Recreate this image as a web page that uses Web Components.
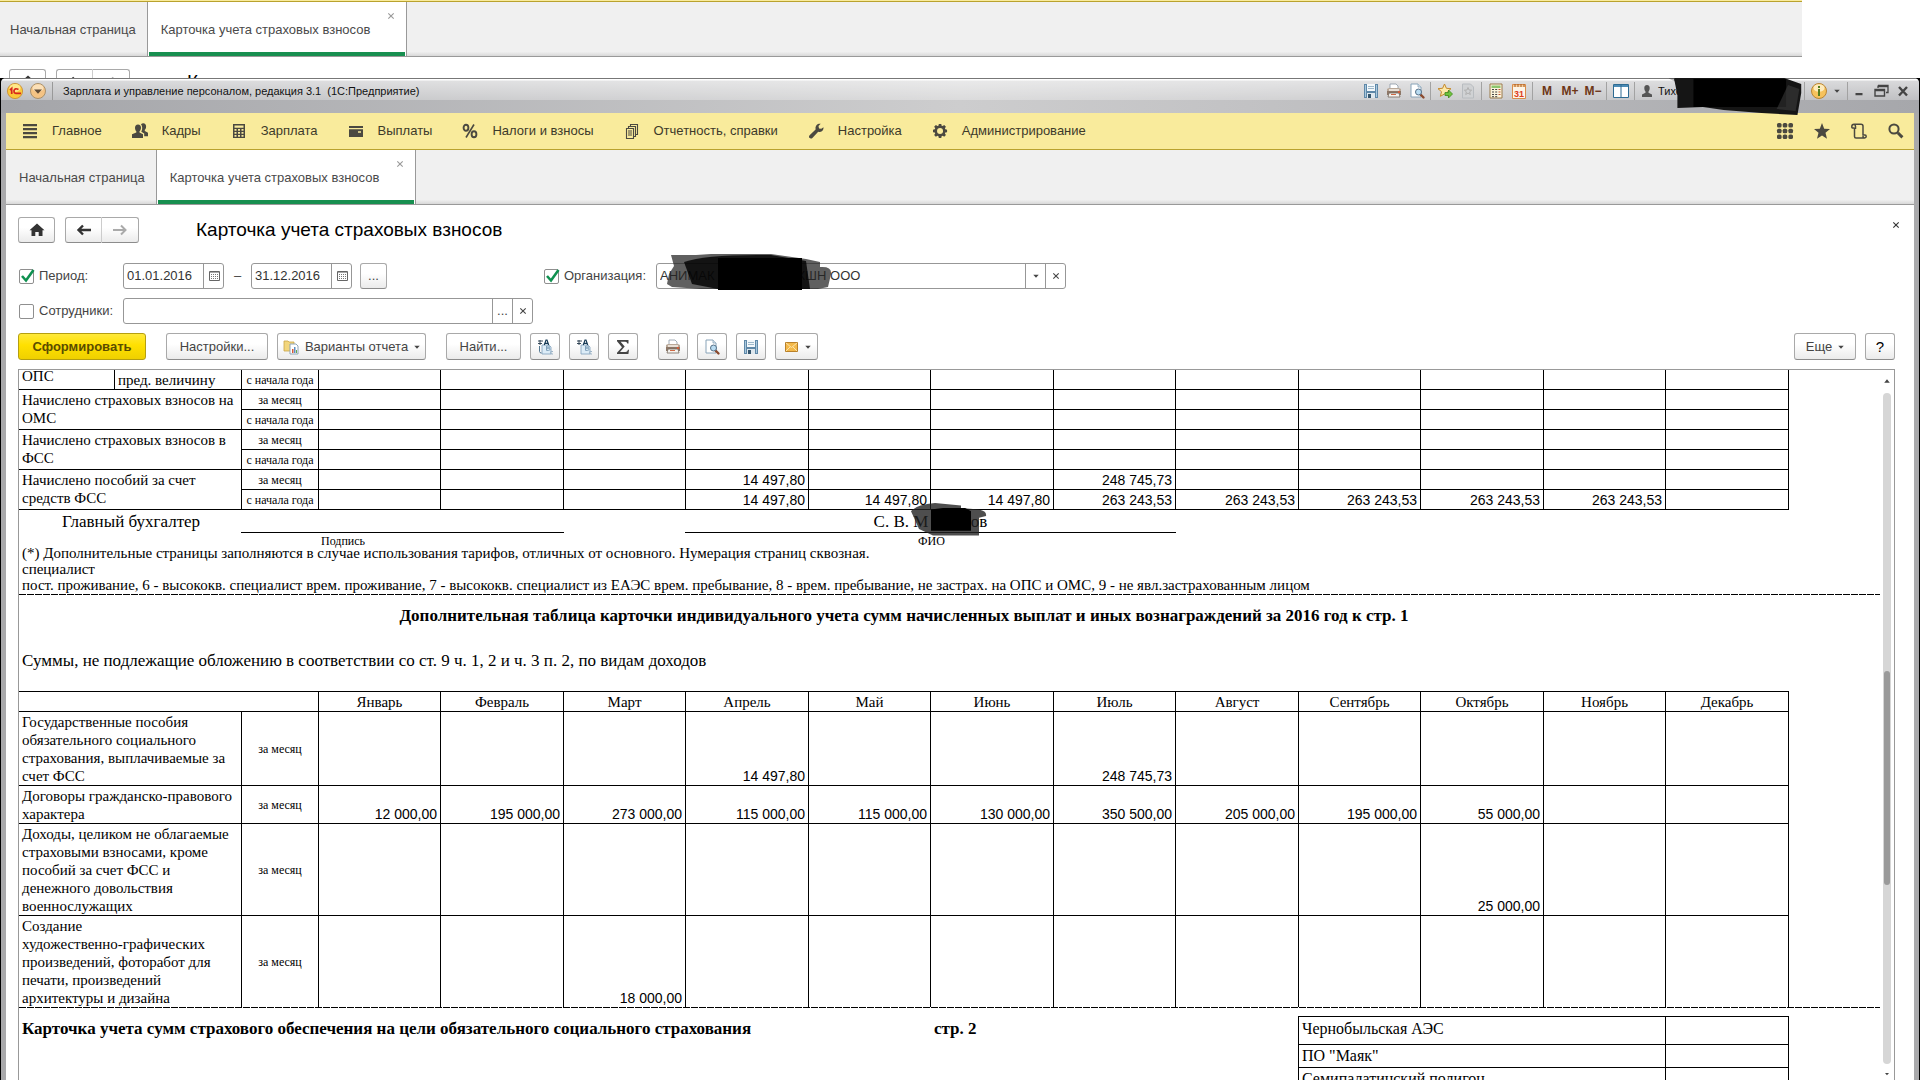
<!DOCTYPE html>
<html lang="ru">
<head>
<meta charset="utf-8">
<title>Карточка учета страховых взносов</title>
<style>
  html, body { height: 100%; margin: 0; }
  body { background: #fff; overflow: hidden; font: 13px/16px "Liberation Sans", Arial, sans-serif; color: #444; }
</style>
</head>
<body>
<payroll-desktop></payroll-desktop>

<script>
/* Registers an element whose shadow root holds the given styles and markup. */
function define(name, css, html, setup) {
  const template = document.createElement('template');
  customElements.define(name, class extends HTMLElement {
    constructor() {
      super();
      template.innerHTML = '<style>*{box-sizing:border-box}' + css + '</style>' +
        (typeof html === 'function' ? '' : html);
      const root = this.attachShadow({ mode: 'open' });
      root.append(template.content.cloneNode(true));
    }
    connectedCallback() {
      if (this.ready) return;
      this.ready = true;
      if (typeof html === 'function') {
        this.shadowRoot.innerHTML = '<style>*{box-sizing:border-box}' + css + '</style>' + html(this);
      }
      if (setup) setup(this, this.shadowRoot);
    }
  });
}

const floppy = '<path d="M1 1h14v14H1z" fill="#5f88a8"/><path d="M2 2h1v12H2zM13 2h1v12h-1z" fill="#a9c9de"/><path d="M4 1h8v7H4z" fill="#f3f8fb"/><path d="M5 3h6v1H5zM5 5h6v1H5z" fill="#9db8ca"/><path d="M4 10h8v5H4z" fill="#dfe8ee"/><path d="M5 11h3v4H5z" fill="#35566e"/>';
const printer = '<path d="M4 1h6l2 2v4H4z" fill="#fff" stroke="#8a98a5" stroke-width=".8"/><path d="M1 6l2-1h10l2 1v6H1z" fill="#b9a898"/><path d="M1 8h14v4H1z" fill="#8d7767"/><path d="M3 6h10v2H3z" fill="#e8dfd6"/><path d="M3 10h10l1 4H2z" fill="#f6f3ef" stroke="#75685d" stroke-width=".8"/><path d="M5 11h5v1H5z" fill="#cf6a45"/><circle cx="13" cy="9" r="1" fill="#e9542c"/>';
const preview = '<path d="M2 1h7l3 3v10H2z" fill="#fff" stroke="#88a3b8"/><path d="M9 1v3h3" fill="#dbe7ef" stroke="#88a3b8" stroke-width=".8"/><path d="M11.5 11.500l3 3" stroke="#8b4a2f" stroke-width="2.400" stroke-linecap="round"/><circle cx="9.500" cy="9" r="3" fill="#b9dcf2" stroke="#557087"/>';
const sheetLetters = '<path d="M5 6h7l2 2v7H5z" fill="#dcecf7" stroke="#7fa0ba" stroke-width=".8"/><path d="M1 2h5M1 4.500h4M3 1v5" stroke="#24394a" stroke-width=".9"/><path d="M7.300 6l1.700-5h1l1.700 5M8 4.300h3" fill="none" stroke="#163a56" stroke-width="1.200"/><path d="M9.500 7h2q1 0 1 1t-1 1h-2h2q1.500 0 1.500 1.200T11.500 11.400h-2z" fill="none" stroke="#7fa0ba"/><path d="M16 12.600q-2.500-1-2.500 1T16 15" fill="none" stroke="#9ab3c6"/>';

const ICONS = {
  lines: '<path d="M1 1h14v2.200H1zM1 5h14v2.200H1zM1 9h14v2.200H1zM1 13h14v2.200H1z" fill="currentColor"/>',
  people: '<path d="M6 1.500c2 0 3 1.400 3 3.200 0 1.600-.7 2.800-1.500 3.500v1.200l3.500 1.800V15H0v-3.800l4.300-1.800V8.200C3.500 7.500 3 6.300 3 4.700c0-1.800 1-3.200 3-3.200z" fill="currentColor"/><path d="M9 1.200C9.600.5 10.400.2 11.200.2c1.900 0 2.900 1.300 2.900 3.200 0 1.500-.5 2.700-1.300 3.400v1.300l3.200 1.600v3.600h-3.800v-2.900L9.300 8.700C10.700 6.200 10.400 3 9 1.200z" fill="currentColor"/>',
  calc: '<path d="M2 1h12v14H2zM3.500 2.500v2.200h9V2.500zM3.500 6v1.800h2V6zM7 6v1.800h2V6zM10.500 6v1.800h2V6zM3.500 9v1.800h2V9zM7 9v1.800h2V9zM10.500 9v1.800h2V9zM3.500 12v1.700h2V12zM7 12v1.700h2V12zM10.500 12v1.700h2V12z" fill="currentColor" fill-rule="evenodd"/>',
  wallet: '<path d="M1 3h14v2H1zM1 6.200h14V14H1zM10 8.200v1.500h3V8.200z" fill="currentColor" fill-rule="evenodd"/>',
  percent: '<g fill="none" stroke="currentColor" stroke-width="1.900"><ellipse cx="4" cy="4.800" rx="2.400" ry="3"/><ellipse cx="12" cy="11.200" rx="2.400" ry="3"/><path d="M12 1.500L4 14.500" stroke-width="1.600"/></g>',
  docs: '<g fill="none" stroke="currentColor" stroke-width="1.100"><path d="M2.500 5.500h7v10h-7zM4.500 5V3.500h7v10H10M6.500 3V1.500h7v10H12"/><path d="M4 8h4M4 10h4M4 12h4"/></g>',
  wrench: '<path d="M15.500 4.200c.3 2.400-1.300 4.500-3.600 4.700-.6 0-1.200 0-1.700-.2L4.400 14.900c-.8.8-2 .9-2.800.2-.8-.8-.8-2 0-2.800l6-5.900C7 4.100 8.200 1.500 10.700.8c.7-.2 1.400-.2 2 0L10.500 3l.5 2.400 2.300.4z" fill="currentColor"/>',
  gear: '<path d="M6.600 1h2.800l.4 2 1.200.5 1.700-1.200 2 2-1.200 1.700.5 1.200 2 .4v2.800l-2 .4-.5 1.200 1.200 1.700-2 2-1.700-1.200-1.200.5-.4 2H6.600l-.4-2-1.200-.5-1.700 1.200-2-2L2.500 12 2 10.800 0 10.400V7.600l2-.4L2.500 6 1.300 4.300l2-2L5 3.500 6.200 3zM8 5.600a3.400 3.400 0 1 0 0 6.800 3.400 3.400 0 0 0 0-6.800z" transform="translate(1 0) scale(.88)" fill="currentColor" fill-rule="evenodd"/>',
  grid: '<g fill="currentColor"><rect width="4.600" height="4.600" rx="1.600"/><rect x="5.700" width="4.600" height="4.600" rx="1.600"/><rect x="11.400" width="4.600" height="4.600" rx="1.600"/><rect y="5.700" width="4.600" height="4.600" rx="1.600"/><rect x="5.700" y="5.700" width="4.600" height="4.600" rx="1.600"/><rect x="11.400" y="5.700" width="4.600" height="4.600" rx="1.600"/><rect y="11.400" width="4.600" height="4.600" rx="1.600"/><rect x="5.700" y="11.400" width="4.600" height="4.600" rx="1.600"/><rect x="11.400" y="11.400" width="4.600" height="4.600" rx="1.600"/></g>',
  star: '<path d="M8 0l2.200 5.700 5.800.3-4.500 3.800L13 15.700 8 12.400l-5 3.300 1.500-5.900L0 6l5.800-.3z" fill="currentColor"/>',
  scroll: '<path d="M3.500 5V13.500q0 1.500 1.500 1.500h8.500M3.500 5H1.500Q.8 5 .8 3.500 .8 1.200 3 1.200h7q2 0 2 2V12h2q1.200 0 1.200 1.400T13.500 15q-1.500 0-1.500-2M3 1.200q1.500.3 1.500 2V6" fill="none" stroke="currentColor" stroke-width="1.500"/>',
  search: '<circle cx="6" cy="6" r="4.600" fill="none" stroke="currentColor" stroke-width="2"/><path d="M9.800 9.800l4.600 4.600" stroke="currentColor" stroke-width="3"/>',
  home: '<path d="M8 1.500l7.500 6.700h-2V14H9.700v-4H6.300v4H2.500V8.200h-2z" fill="#333"/>',
  back: '<path d="M15 8H3M7 3.500L2.500 8 7 12.500" fill="none" stroke="#333" stroke-width="2.400"/>',
  forward: '<path d="M1 8h12M9 3.500L13.500 8 9 12.500" fill="none" stroke="#aaa" stroke-width="2"/>',
  date: '<path d="M3.500 3.500h10v9h-10z" fill="none" stroke="#666"/><path d="M5 6.500h7M5 8.500h7M5 10.500h7" stroke="#777" stroke-dasharray="1 1"/><path d="M4 4.500h9" stroke="#aaa"/>',
  variants: '<path d="M1 2h4l1 1h5v9H1z" fill="#f2d67d" stroke="#c9a546" stroke-width=".8"/><path d="M7 5h6l2 2v8H7z" fill="#fff" stroke="#8fa5b7"/><path d="M9 10h1.500v4H9z" fill="#d65a3a"/><path d="M11 8h1.500v6H11z" fill="#5d8fc4"/><path d="M13 11h1v3h-1z" fill="#67a54b"/>',
  letters: sheetLetters + '<path d="M2.500 7v5.500q0 1.500 2 1.500" fill="none" stroke="#557891"/>',
  letters2: sheetLetters,
  sigma: '<path d="M2 1h11.500v3.500h-1.200q-.2-1.800-2-1.800H5.600L9.700 7.600 5 13h5.500q2 0 2.500-2.200h1L13.400 15H2v-1.200L7 8.200 2 2.200z" fill="#444"/>',
  printer, preview, floppy,
  mail: '<path d="M2.500 3.500h12v9h-12z" fill="#f4b94a" stroke="#b9812a"/><path d="M3 4l5.500 4.500L14 4M3 12l4-4M14 12l-4-4" fill="none" stroke="#fbe4ab"/>',
  starAdd: '<path d="M7.500 1l1.900 4.300 4.600.4-3.500 3 1.100 4.600-4.100-2.400-4.100 2.400 1.100-4.600L1 5.700l4.600-.4z" fill="#fde9a8" stroke="#c58a2d"/><path d="M8 9.500h3.500V7l4 4-4 4v-2.500H8z" fill="#6fc23c" stroke="#3d8a1c" stroke-width=".8"/>',
  starDoc: '<path d="M2.500 1h8l3 3v11h-11z" fill="#d0d2d4" stroke="#b8bcc0"/><path d="M8 4.500l1 2.500 2.600.2-2 1.700.7 2.600L8 10.100l-2.300 1.400.7-2.600-2-1.700L7 7z" fill="none" stroke="#b0b0b0"/>',
  calcColor: '<path d="M2 1h12v14H2z" fill="#fbf4dc" stroke="#9a7a4a"/><path d="M3.500 2.500h9v2.500h-9z" fill="#8cc56d"/><path d="M4 6.500h2M4 9h2M4 11.500h2M4 13.700h2M7.200 6.500h2M7.200 9h2M7.200 11.500h2M7.200 13.700h2" stroke="#444"/><path d="M10.500 6.500h2M10.500 9h2M10.500 11.500h2" stroke="#c4542e"/>',
  calendar: '<path d="M1.500 1.500h13v14h-13z" fill="#fdf5e8" stroke="#d98c4a"/><path d="M2 2h12v2H2z" fill="#f9cf9c"/><path d="M4 1v3M7 1v3M10 1v3M13 1v3" stroke="#a65c22"/><text x="8" y="14" text-anchor="middle" font-size="9" font-weight="bold" fill="#dd3c1c">31</text>',
  split: '<path d="M.5 1.500h15v13H.5z" fill="#fff" stroke="#2e6b92"/><path d="M1 2h14v2H1z" fill="#4c8bb5"/><path d="M8 2v12" stroke="#2e6b92"/>',
  user: '<path d="M8 2c2 0 2.700 1.400 2.700 3S10 8 9.500 8.600v1.200L13 11.500V14H3v-2.500l3.500-1.700V8.600C6 8 5.300 6.600 5.300 5S6 2 8 2z" fill="#555"/>',
  info: '<circle cx="8" cy="8" r="7.500" fill="#f6c25d" stroke="#b98535"/><ellipse cx="8" cy="5" rx="5.500" ry="3.800" fill="#fdebbd"/><path d="M7 3h2v2H7zM7 6h2v7H7z" fill="#557d1e"/>',
  brand: '<circle cx="8" cy="8" r="7.600" fill="#fbc83a" stroke="#c98a2b" stroke-width=".8"/><ellipse cx="8" cy="5" rx="5.500" ry="4" fill="#ffe88a"/><path d="M3 7l1.700-1.500V11M11.500 6.500Q8 4.600 7 7.500 6.800 10.500 9.500 10.300H14" fill="none" stroke="#d8261c" stroke-width="1.700"/>',
  drop: '<circle cx="8" cy="8" r="7.500" fill="#f4c384" stroke="#a8906c"/><ellipse cx="8" cy="5" rx="5.500" ry="3.800" fill="#fbe0b8"/><path d="M4 6.500h8L8 10.800z" fill="#5e4a36"/>',
  minimize: '<path d="M4.500 10h7v2.200h-7z" fill="#444"/>',
  restore: '<path d="M5 2.500h10v7h-2M5 2.500V5M5 3.500h10" fill="none" stroke="#444" stroke-width="1.300"/><path d="M2 6.500h9.500v6.500H2zM2 7.500h9" fill="none" stroke="#444" stroke-width="1.400"/>',
  close: '<path d="M4 4l8 8.500M12 4l-8 8.500" stroke="#444" stroke-width="2.400"/>',
  x: '<path d="M5.300 5.300l5.400 5.400M10.700 5.300l-5.400 5.400" stroke="currentColor" stroke-width="1.100"/>',
  down: '<path d="M5.300 6.800h5.400L8 9.800z" fill="#444"/>',
  up: '<path d="M4.800 10h6.400L8 6z" fill="#444"/>'
};

define('ui-icon',
  ':host{display:inline-flex;flex:none;width:16px;height:16px}svg{width:100%;height:100%;overflow:visible}',
  el => `<svg viewBox="0 0 16 16" aria-hidden="true">${ICONS[el.getAttribute('name')]}</svg>`);

/* Push button with an optional look: primary, narrow side by side pair. */
define('ui-button', `
  :host{display:inline-flex;height:26px}
  button{font:inherit;color:#444;width:100%;height:100%;margin:0;padding:0 var(--pad,10px);display:flex;align-items:center;justify-content:center;gap:6px;
    border:1px solid #a9a9a9;border-bottom-color:#8c8c8c;border-radius:3px;background:linear-gradient(#fff 40%,#ebebeb);white-space:nowrap}
  :host([primary]) button{font-weight:bold;color:#5a4c00;border-color:#b59f10;background:linear-gradient(#ffe93a,#ffe000 45%,#efd000)}
  :host([first]) button{border-radius:3px 0 0 3px;border-right-color:#ccc}
  :host([last]) button{border-radius:0 3px 3px 0;border-left:0}`,
  el => `<button type="button" aria-label="${el.getAttribute('label') || ''}"><slot></slot></button>`,
  (el, root) => { if (!el.hasAttribute('label')) root.querySelector('button').removeAttribute('aria-label'); });

define('ui-check', `
  :host{display:inline-flex}
  label{display:flex;align-items:center;gap:5px;white-space:nowrap}
  span{display:grid}
  input,svg{grid-area:1/1}
  input{appearance:none;width:15px;height:15px;margin:0;border:1px solid #8f8f8f;border-radius:2px;background:#fff}
  svg{width:15px;height:15px;overflow:visible;pointer-events:none;display:none}
  input:checked+svg{display:block}`,
  el => `<label><span><input type="checkbox" ${el.hasAttribute('checked') ? 'checked' : ''}><svg viewBox="0 0 15 15"><path d="M3 7l4 4.500L14.500 1" fill="none" stroke="#0f9150" stroke-width="2.600"/></svg></span><slot></slot></label>`);

/* Text box with small buttons attached on its right side. */
define('ui-field', `
  :host{display:flex;height:26px;border:1px solid #979797;border-radius:3px;background:#fff}
  input{font:inherit;color:#333;flex:1;min-width:0;border:0;padding:0 0 0 3px;margin:0;background:none;outline:0}
  div{display:flex}
  ::slotted(button){all:unset;width:20px;display:flex;align-items:center;justify-content:center;border-left:1px solid #979797;color:#444}`,
  el => `<input type="text" aria-label="${el.getAttribute('label')}" value="${el.getAttribute('value') || ''}"><div><slot></slot></div>`);

define('page-tabs', `
  :host{display:flex;height:55px;background:linear-gradient(#f0f0f0 92%,#d8d8d8);border-bottom:1px solid #999}
  button{font:inherit;color:#4a4a4a;background:none;border:0;margin:0;padding:2px 11px 0 var(--lead,13px);white-space:nowrap}
  .active{position:relative;width:260px;padding:2px 0 0 13px;text-align:left;background:#fff;border:solid #999;border-width:0 1px}
  .active::after{content:"";position:absolute;inset:auto 1px 0 1px;height:4px;background:#178f50}
  ui-icon{position:absolute;right:7px;top:6px;color:#999}`,
  '<button type="button">Начальная страница</button><button type="button" class="active">Карточка учета страховых взносов<ui-icon name="x"></ui-icon></button>');

define('form-header', `
  :host{display:flex;align-items:center;height:26px}
  .home{width:37px;margin-right:10px}
  .nav{width:37px}
  h1{flex:1;margin:0 0 0 57px;font-size:19px;line-height:24px;font-weight:normal;color:#000;white-space:nowrap}
  .home,.nav{--pad:0}`,
  `<ui-button class="home" label="Начальная страница"><ui-icon name="home"></ui-icon></ui-button>
   <ui-button class="nav" first label="Назад"><ui-icon name="back"></ui-icon></ui-button>
   <ui-button class="nav" last label="Вперед"><ui-icon name="forward"></ui-icon></ui-button>
   <h1>Карточка учета страховых взносов</h1><slot></slot>`);

define('title-bar', `
  :host{display:flex;align-items:center;height:35px;padding:0 8px 10px 6px;color:#111;font-size:11px;
    border-top:1px solid #777;
    background:linear-gradient(#fff 1px,#ffffff90 2px,#ffffff48 21px,#ffffff00 21px),linear-gradient(90deg,#a4a5a9,#cdcdce 50%,#c2c2c4 65%,#a6a7ab)}
  .sep{width:1px;height:18px;background:#999;margin:0 10px 0 6px}
  .drop{margin-left:7px}
  .title{flex:1;white-space:pre}
  button{all:unset;display:flex}
  .group{display:flex;align-items:center;gap:7px;height:18px;padding:0 5px 0 6px;border-right:1px solid #a2a2a2}
  .mem{width:16px;font-weight:bold;font-size:12px;color:#6d3616;justify-content:center}
  .user{width:170px;position:relative;gap:3px;padding-left:4px}
  .user svg{position:absolute;left:32px;top:-9px;width:138px;height:42px;overflow:visible}
  .info{gap:2px;padding-right:2px}
  .win{display:flex;gap:6px;padding-left:3px}`,
  `<ui-icon name="brand"></ui-icon><ui-icon class="drop" name="drop"></ui-icon><span class="sep"></span>
   <span class="title">Зарплата и управление персоналом, редакция 3.1  (1С:Предприятие)</span>
   <div class="group"><button aria-label="Сохранить"><ui-icon name="floppy"></ui-icon></button><button aria-label="Печать"><ui-icon name="printer"></ui-icon></button><button aria-label="Просмотр"><ui-icon name="preview"></ui-icon></button></div>
   <div class="group"><button aria-label="В избранное"><ui-icon name="starAdd"></ui-icon></button><button aria-label="Избранное"><ui-icon name="starDoc"></ui-icon></button></div>
   <div class="group"><button aria-label="Калькулятор"><ui-icon name="calcColor"></ui-icon></button><button aria-label="Календарь"><ui-icon name="calendar"></ui-icon></button></div>
   <div class="group"><button class="mem">M</button><button class="mem">M+</button><button class="mem">M−</button></div>
   <div class="group"><button aria-label="Окна"><ui-icon name="split"></ui-icon></button></div>
   <div class="group user"><ui-icon name="user"></ui-icon><span>Тихо</span>
     <svg viewBox="0 0 146 42" preserveAspectRatio="none" aria-hidden="true"><path d="M8 8Q5 3 20 2L50 0 78 4 124 5 142 11V20L138 42 100 40 60 37 38 34 11 35V22z" fill="#151515"/><path d="M8 8Q0 6 2 3L14 1V26z" fill="#222" opacity=".3"/><path d="M28 6h98v28H28z" fill="#000"/><path d="M128 12l12 4-4 22-20-2z" fill="#444" opacity=".5"/></svg></div>
   <div class="group info"><button aria-label="Справка"><ui-icon name="info"></ui-icon></button><ui-icon name="down"></ui-icon></div>
   <div class="win"><button aria-label="Свернуть"><ui-icon name="minimize"></ui-icon></button><button aria-label="Восстановить"><ui-icon name="restore"></ui-icon></button><button aria-label="Закрыть"><ui-icon name="close"></ui-icon></button></div>`);

define('menu-item', `
  :host{display:block}
  button{all:unset;display:flex;align-items:center;gap:14px;white-space:nowrap;color:#3d3a2a}
  ui-icon{color:#4b4940}`,
  el => `<button type="button"><ui-icon name="${el.getAttribute('icon')}"></ui-icon><slot></slot></button>`);

define('main-menu', `
  :host{display:flex;align-items:center;gap:30px;height:37px;padding:0 10px 0 16px;background:#f9eb9c;border-bottom:1px solid #b9a22e}
  .tools{display:flex;gap:21px;margin-left:auto}
  .tools button{all:unset;display:flex;color:#4b4940}`,
  `<menu-item icon="lines">Главное</menu-item><menu-item icon="people">Кадры</menu-item><menu-item icon="calc">Зарплата</menu-item>
   <menu-item icon="wallet">Выплаты</menu-item><menu-item icon="percent">Налоги и взносы</menu-item><menu-item icon="docs">Отчетность, справки</menu-item>
   <menu-item icon="wrench">Настройка</menu-item><menu-item icon="gear">Администрирование</menu-item>
   <div class="tools"><button aria-label="Все функции"><ui-icon name="grid"></ui-icon></button><button aria-label="Избранное"><ui-icon name="star"></ui-icon></button><button aria-label="История"><ui-icon name="scroll"></ui-icon></button><button aria-label="Поиск"><ui-icon name="search"></ui-icon></button></div>`);

define('report-filters', `
  :host{display:grid;gap:9px}
  .row{display:flex;align-items:center}
  .lead{width:105px;padding-left:1px}
  .date{width:101px}
  .dash{width:27px;text-align:center}
  .dots{width:27px;margin-left:8px;--pad:0}
  .org{margin-left:157px;width:112px}
  .wide{width:410px}
  .redact{position:relative}
  .redact svg{position:absolute;left:10px;top:-9px;width:166px;height:36px}`,
  `<div class="row">
     <ui-check class="lead" checked>Период:</ui-check>
     <ui-field class="date" label="Начало периода" value="01.01.2016"><button aria-label="Выбрать"><ui-icon name="date"></ui-icon></button></ui-field>
     <span class="dash">–</span>
     <ui-field class="date" label="Конец периода" value="31.12.2016"><button aria-label="Выбрать"><ui-icon name="date"></ui-icon></button></ui-field>
     <ui-button class="dots">...</ui-button>
     <ui-check class="org" checked>Организация:</ui-check>
     <div class="redact"><ui-field class="wide" label="Организация" value="АНИМАК${'&nbsp;'.repeat(23)}КШН ООО"><button aria-label="Список"><ui-icon name="down"></ui-icon></button><button aria-label="Очистить"><ui-icon name="x"></ui-icon></button></ui-field>
     <svg viewBox="0 0 166 36" aria-hidden="true"><path d="M5 1h25L45 0h60l35 5 14 3v5q12-1 11 7l-3 13-10 2H35L6 33 1 30 3 20 8 12z" fill="#222" opacity=".72"/><path d="M18 8Q40 0 105 1l35 6 4 28H52L26 30z" fill="#000" opacity=".8"/><path d="M52 4h84v32H52z" fill="#000"/></svg></div>
   </div>
   <div class="row">
     <ui-check class="lead">Сотрудники:</ui-check>
     <ui-field class="wide" label="Сотрудники"><button>...</button><button aria-label="Очистить"><ui-icon name="x"></ui-icon></button></ui-field>
   </div>`);

define('report-toolbar', `
  :host{display:flex;gap:9px}
  ui-button{height:27px}
  .gap{margin-right:11px}
  .main{width:128px}.set{width:102px}.var{width:149px;--pad:5px}.find{width:75px}
  .sq{width:30px;--pad:0}.mail{width:43px;--pad:0}
  .more{width:62px;margin-left:auto;--pad:0 0 0 10px}
  .tight{margin:0 -5px}`,
  `<ui-button primary class="main gap">Сформировать</ui-button>
   <ui-button class="set">Настройки...</ui-button>
   <ui-button class="var gap"><ui-icon name="variants"></ui-icon>Варианты отчета<ui-icon class="tight" name="down"></ui-icon></ui-button>
   <ui-button class="find">Найти...</ui-button>
   <ui-button class="sq" label="Развернуть"><ui-icon name="letters"></ui-icon></ui-button>
   <ui-button class="sq" label="Свернуть"><ui-icon name="letters2"></ui-icon></ui-button>
   <ui-button class="sq gap" label="Сумма"><ui-icon name="sigma"></ui-icon></ui-button>
   <ui-button class="sq" label="Печать"><ui-icon name="printer"></ui-icon></ui-button>
   <ui-button class="sq" label="Просмотр"><ui-icon name="preview"></ui-icon></ui-button>
   <ui-button class="sq" label="Сохранить"><ui-icon name="floppy"></ui-icon></ui-button>
   <ui-button class="mail" label="Отправить"><ui-icon name="mail"></ui-icon><ui-icon class="tight" name="down"></ui-icon></ui-button>
   <ui-button class="more">Еще<ui-icon class="tight" name="down"></ui-icon></ui-button>
   <ui-button class="sq" label="Справка"><b style="font-weight:normal;font-size:15px;color:#000">?</b></ui-button>`);

const MONTHS = ['Январь','Февраль','Март','Апрель','Май','Июнь','Июль','Август','Сентябрь','Октябрь','Ноябрь','Декабрь'];
const cols = '<colgroup><col style="width:96px"><col style="width:127px"><col style="width:77px">' +
  MONTHS.map((m, i) => `<col style="width:${i % 2 ? 123 : 122}px">`).join('') + '</colgroup>';
/* Twelve month cells; values are keyed by month index. */
const cells = (values = {}) => MONTHS.map((m, i) => `<td class="num">${values[i] || ''}</td>`).join('');
const pair = (label, month, year) =>
  `<tr><th colspan="2" rowspan="2">${label}</th><td class="kind">за месяц</td>${cells(month)}</tr>
   <tr><td class="kind">с начала года</td>${cells(year)}</tr>`;
const single = (label, values) => `<tr><th colspan="2">${label}</th><td class="kind">за месяц</td>${cells(values)}</tr>`;
const total = '263 243,53', part = '14 497,80';

define('report-sheet', `
  :host{display:block;width:1861px;font-family:"Liberation Serif","Times New Roman",serif;color:#000}
  table{border-collapse:separate;border-spacing:0;table-layout:fixed;width:1770px}
  td,th{border:solid #000;border-width:0 1px 1px 0;padding:0;height:20px;font-weight:normal}
  th{text-align:left;vertical-align:top;font-size:15px;line-height:18px;padding:1px 2px 0 3px}
  .top th{line-height:13px;padding-top:0}
  .top th+th{line-height:18px;padding-top:1px}
  .kind{font-size:12px;line-height:14px;text-align:center;white-space:nowrap}
  .num{font:14px/18px "Liberation Sans",Arial,sans-serif;text-align:right;vertical-align:bottom;padding-right:3px;white-space:nowrap}
  .months{border-top:1px solid #000;margin-top:6px}
  .months thead td{font-size:15px;line-height:18px;text-align:center}
  .months tbody tr:last-child>*{border-bottom:0}
  .sign{display:grid;grid-template-columns:222px 323px 121px 491px;font-size:17px;line-height:24px}
  .sign div{height:23px}
  .sign .line{border-bottom:1px solid #000;text-align:center}
  .sign .who{padding-left:43px}
  .sign small{font-size:12px;line-height:16px;height:12px}
  .name{position:relative;display:inline-block;white-space:pre}
  .name svg{position:absolute;left:37px;top:-7px;width:76px;height:35px}
  .sign small:nth-of-type(2){padding-left:80px}
  .sign small:nth-of-type(4){padding-left:233px}
  p{margin:0;padding-left:3px;font-size:15px;line-height:16px;white-space:nowrap}
  .cut{height:1px;background:repeating-linear-gradient(90deg,#000 0 7px,transparent 7px 8px)}
  .notes{padding-bottom:1px}
  h2{margin:0;font-size:17px;line-height:42px;width:1770px;text-align:center}
  .sub{font-size:17px;line-height:48px}
  .next{display:grid;grid-template-columns:912px 367px 491px;padding-top:8px}
  h3{margin:0;padding-left:3px;font-size:17px;line-height:26px}
  .places{width:491px;border:solid #000;border-width:1px 0 0 1px}
  .places td{height:23px;font-size:16px;line-height:20px;padding-left:3px}
  .places tr:first-child td{height:28px;padding-bottom:3px}`,
  `<table>${cols}
     <tr class="top"><th>ОПС</th><th>пред. величину</th><td class="kind">с начала года</td>${cells()}</tr>
     ${pair('Начислено страховых взносов на ОМС')}
     ${pair('Начислено страховых взносов в ФСС')}
     ${pair('Начислено пособий за счет средств ФСС', {3: part, 6: '248 745,73'}, {3: part, 4: part, 5: part, 6: total, 7: total, 8: total, 9: total, 10: total})}
   </table>
   <div class="sign">
     <div class="who">Главный бухгалтер</div><div class="line"></div><div></div>
     <div class="line"><span class="name">С. В. М          ов<svg viewBox="0 0 76 43" preserveAspectRatio="none" aria-hidden="true"><path d="M0 10Q5 2 24 0l26 3v3l18 2q8 2 7 8l-7 2v22H22L8 32 3 18z" fill="#222" opacity=".8"/><path d="M20 8l12-2h22l6 4v24H20z" fill="#000"/></svg></span></div>
     <small></small><small>Подпись</small><small></small><small>ФИО</small>
   </div>
   <div class="notes">
     <p>(*) Дополнительные страницы заполняются в случае использования тарифов, отличных от основного. Нумерация страниц сквозная.</p>
     <p>специалист</p>
     <p>пост. проживание, 6 - высококв. специалист врем. проживание, 7 - высококв. специалист из ЕАЭС врем. пребывание, 8 - врем. пребывание, не застрах. на ОПС и ОМС, 9 - не явл.застрахованным лицом</p>
   </div>
   <div class="cut"></div>
   <h2>Дополнительная таблица карточки индивидуального учета сумм начисленных выплат и иных вознаграждений за 2016 год к стр. 1</h2>
   <p class="sub">Суммы, не подлежащие обложению в соответствии со ст. 9 ч. 1, 2 и ч. 3 п. 2, по видам доходов</p>
   <table class="months">${cols}
     <thead><tr><td colspan="3"></td>${MONTHS.map(m => `<td>${m}</td>`).join('')}</tr></thead>
     <tbody>
     ${single('Государственные пособия обязательного социального страхования, выплачиваемые за счет ФСС', {3: part, 6: '248 745,73'})}
     ${single('Договоры гражданско-правового характера', ['12 000,00','195 000,00','273 000,00','115 000,00','115 000,00','130 000,00','350 500,00','205 000,00','195 000,00','55 000,00'])}
     ${single('Доходы, целиком не облагаемые страховыми взносами, кроме пособий за счет ФСС и денежного довольствия военнослужащих', {9: '25 000,00'})}
     ${single('Создание<br>художественно-графических произведений, фоторабот для печати, произведений архитектуры и дизайна', {2: '18 000,00'})}
     </tbody>
   </table>
   <div class="cut"></div>
   <div class="next">
     <h3>Карточка учета сумм страхового обеспечения на цели обязательного социального страхования</h3>
     <h3>стр. 2</h3>
     <table class="places"><colgroup><col style="width:367px"><col style="width:123px"></colgroup>
       <tr><td>Чернобыльская АЭС</td><td></td></tr><tr><td>ПО "Маяк"</td><td></td></tr><tr><td>Семипалатинский полигон</td><td></td></tr>
     </table>
   </div>`);

define('scroll-rail', `
  :host{display:flex;flex-direction:column;align-items:center;width:14px;padding:3px 0 0}
  .track{flex:1;width:8px;margin:4px 0 4px;border-radius:4px;background:#d6d6d6;display:grid;grid-template-rows:278fr 214fr 179fr}
  .thumb{grid-row:2;width:6px;margin:0 auto;border-radius:3px;background:#9a9a9a}
  ui-icon{width:14px}
  .end{height:12px}`,
  '<ui-icon name="up"></ui-icon><div class="track"><div class="thumb"></div></div><ui-icon class="end" name="down"></ui-icon>');

define('report-form', `
  :host{display:flex;flex-direction:column;min-height:0;flex:1;padding:12px 19px 0 12px;background:#fff}
  report-filters{margin:20px 0 9px}
  .shut{align-self:flex-start;margin-right:-9px;color:#333}
  .view{display:flex;flex:1;min-height:0;margin-top:9px;border:solid #999;border-width:1px 1px 0}
  .paper{flex:1;min-width:0;overflow:hidden}`,
  `<form-header><ui-icon class="shut" name="x"></ui-icon></form-header>
   <report-filters></report-filters><report-toolbar></report-toolbar>
   <div class="view"><div class="paper"><report-sheet></report-sheet></div><scroll-rail></scroll-rail></div>`);

define('app-window', `
  :host{display:flex;flex-direction:column;flex:1;min-height:0;background:#000;padding:0 1px}
  .frame{display:flex;flex-direction:column;flex:1;min-height:0;background:#a9a9ab;border-radius:5px 5px 0 0;overflow:hidden}
  .inner{display:flex;flex-direction:column;flex:1;min-height:0;margin:0 5px}`,
  `<div class="frame"><title-bar></title-bar><div class="inner"><slot></slot></div></div>`);

define('payroll-desktop', `
  :host{display:flex;flex-direction:column;height:100vh}
  .behind{height:78px;overflow:hidden}
  .back{margin-right:118px}
  .strip{height:2px;background:linear-gradient(#f9eb9c 50%,#b9a22e 50%)}
  .back page-tabs{--lead:10px}
  .behind form-header{padding-left:9px;margin-top:12px}`,
  `<div class="behind"><div class="back"><div class="strip"></div><page-tabs></page-tabs></div><form-header></form-header></div>
   <app-window><main-menu></main-menu><page-tabs></page-tabs><report-form></report-form></app-window>`);
</script>
</body>
</html>
